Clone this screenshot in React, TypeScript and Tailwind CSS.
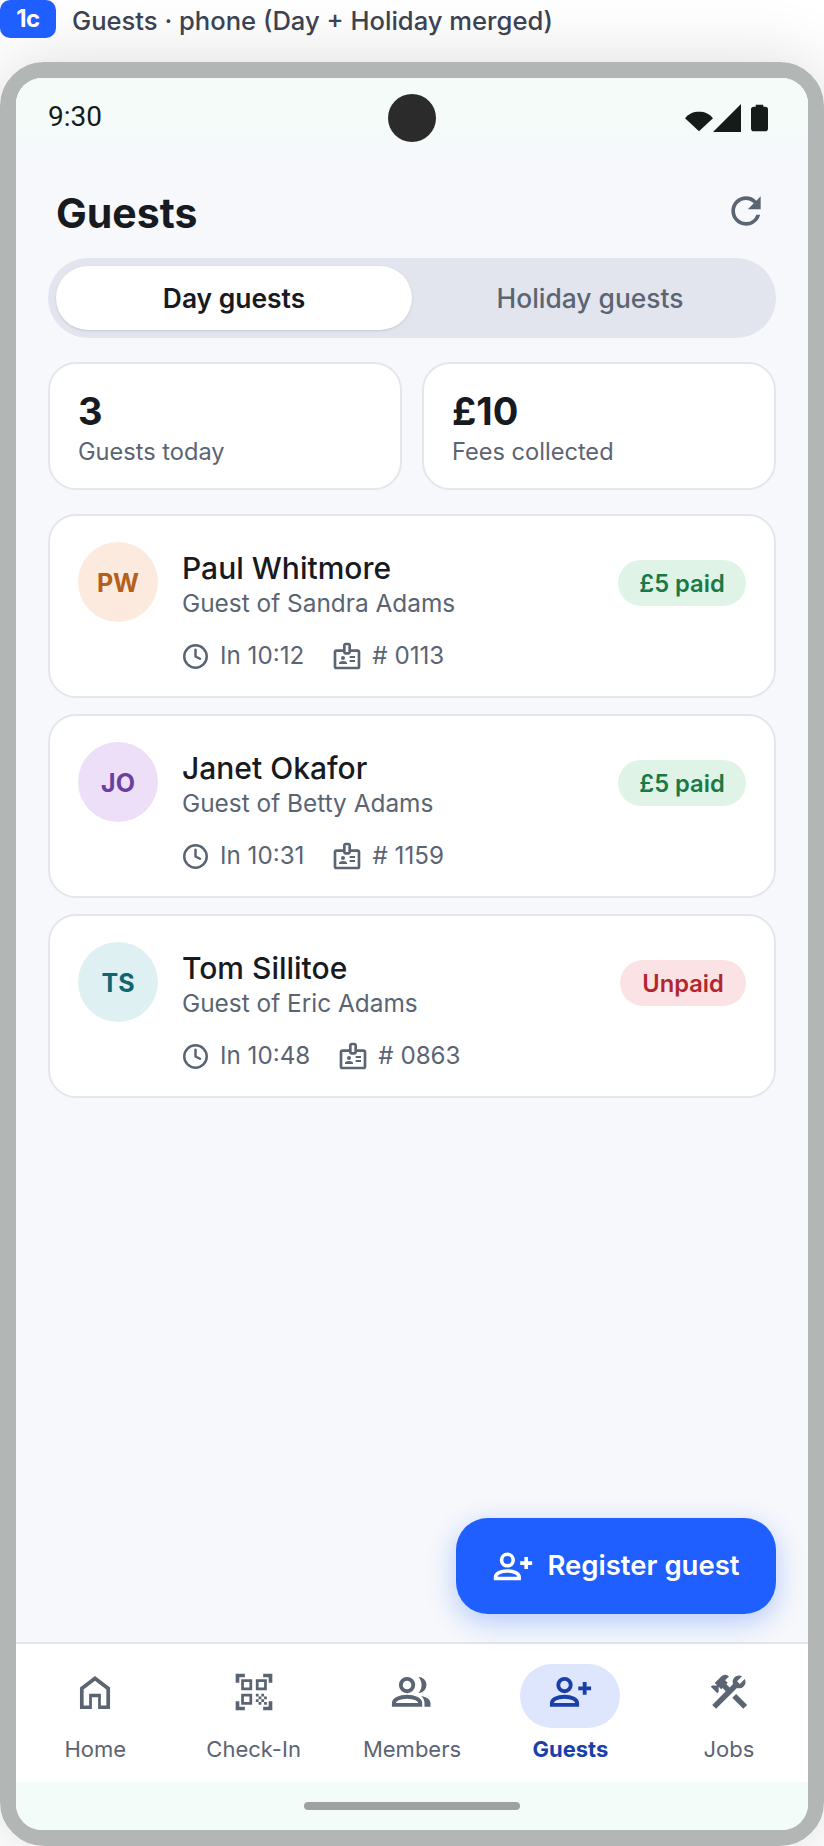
import React, { FC, ReactNode } from "react";
import { Clock } from "lucide-react";
import { MdConstruction, MdOutlineBadge, MdQrCodeScanner, MdRefresh } from "react-icons/md";

const fontStyle = "font-['Inter',sans-serif]";

const HomeIcon: FC = () => (
  <svg viewBox="0 0 24 24" className="h-11 w-11 fill-current" fillRule="evenodd">
    <path d="M3.800 21.300V9.600L12 3.300l8.200 6.300v11.700h-6.500v-6.400h-3.400v6.400H3.800ZM5.800 19.400h3V13h6.400v6.400h3v-8.800L12 5.800l-6.200 4.800v8.800Z" />
  </svg>
);

const PersonAddIcon: FC<{ className?: string }> = ({ className }) => (
  <svg viewBox="0 0 24 24" fill="none" stroke="currentColor" strokeWidth="2.100" className={className}>
    <circle cx="9" cy="8.200" r="3.400" />
    <path d="M2.100 19v-.8c0-2.300 3.100-3.600 6.900-3.600s6.900 1.300 6.900 3.600v.8H2.100Z" />
    <path d="M20 6.500v7M16.500 10h7" />
  </svg>
);

const MembersIcon: FC = () => (
  <svg viewBox="0 0 24 24" className="h-11 w-11 fill-current">
    <circle cx="9.300" cy="8.200" r="3.400" fill="none" stroke="currentColor" strokeWidth="2.100" />
    <path d="M2.100 19v-.8c0-2.300 3.300-3.600 7.200-3.600s7.200 1.300 7.200 3.600v.8H2.100Z" fill="none" stroke="currentColor" strokeWidth="2.100" />
    <path d="M15.500 3.800a4.400 4.400 0 0 1 0 8.800 6.500 6.500 0 0 0 0-8.800Z" />
    <path d="M17 14.200c3 .5 5.100 1.900 5.100 4V20H18.800v-2c0-1.500-.6-2.800-1.800-3.800Z" />
  </svg>
);

const WifiIcon: FC = () => (
  <svg viewBox="0 0 30 22" className="h-[22px] w-[28px] fill-[#141b18]">
    <path d="M0 8C4 3 9 1 15 1s11 2 15 7L15 22 0 8Z" />
  </svg>
);

const SignalIcon: FC = () => (
  <svg viewBox="0 0 28 28" className="h-7 w-7 fill-[#141b18]">
    <path d="M28 0v28H0L28 0Z" />
  </svg>
);

const BatteryIcon: FC = () => (
  <svg viewBox="0 0 18 28" className="h-7 w-[17px] fill-[#141b18]">
    <path d="M5 0h8v2h2a3 3 0 0 1 3 3v20a3 3 0 0 1-3 3H3a3 3 0 0 1-3-3V5a3 3 0 0 1 3-3h2V0Z" />
  </svg>
);

const Stat: FC<{ value: string; label: string }> = ({ value, label }) => (
  <div className="h-[128px] flex-1 rounded-[28px] border-2 border-[#e3e6ed] bg-white pl-[28px] pt-[25px]">
    <div className="text-[38px] leading-[44px] font-bold text-[#171a1f]">{value}</div>
    <div className="mt-[5px] text-[23.600px] leading-[28px] text-[#5b6473]">{label}</div>
  </div>
);

type GuestProps = {
  initials: string;
  avatarClass: string;
  name: string;
  host: string;
  time: string;
  number: string;
  paid: boolean;
};

const GuestCard: FC<GuestProps> = ({ initials, avatarClass, name, host, time, number, paid }) => (
  <div className="flex h-[184px] rounded-[28px] border-2 border-[#e3e6ed] bg-white pl-[28px] pr-[28px] pt-[26px]">
    <div className={`flex h-20 w-20 items-center justify-center rounded-full pt-[3px] text-[25px] font-bold ${avatarClass}`}>
      {initials}
    </div>
    <div className="ml-[24px] flex-1 pt-[8px]">
      <div className="text-[30px] leading-[36px] font-[550] text-[#171a1f]">{name}</div>
      <div className="text-[24.400px] leading-[34px] text-[#5b6473]">{host}</div>
      <div className="mt-[20px] flex items-center text-[24.200px] leading-[30px] text-[#5b6473]">
        <Clock size={27} strokeWidth={2.2} />
        <span className="ml-[11px]">In {time}</span>
        <MdOutlineBadge size={32} className="ml-[27px]" />
        <span className="ml-[9px]"># {number}</span>
      </div>
    </div>
    {paid ? (
      <div className="mt-[18px] flex h-[46px] w-[128px] items-center justify-center rounded-full bg-[#dff3e7] pt-[1px] text-[23.700px] font-semibold text-[#1a7a46]">
        £5 paid
      </div>
    ) : (
      <div className="mt-[18px] flex h-[46px] w-[126px] items-center justify-center rounded-full bg-[#fbe3e5] pt-[1px] text-[23.700px] font-semibold text-[#b3262e]">
        Unpaid
      </div>
    )}
  </div>
);

const NavItem: FC<{ label: string; icon: ReactNode; active?: boolean }> = ({ label, icon, active }) => (
  <div className="flex flex-1 flex-col items-center">
    <div
      className={`flex h-16 w-[100px] items-center justify-center rounded-full pb-2 ${
        active ? "bg-[#dde6fd] text-[#1a3fa8]" : "text-[#5b6473]"
      }`}
    >
      {icon}
    </div>
    <div className={`mt-[7px] text-[22px] leading-[28px] ${active ? "font-bold text-[#1a3fa8]" : "text-[#5b6473]"}`}>
      {label}
    </div>
  </div>
);

export default function App() {
  return (
    <div className={`h-[1846px] w-[824px] overflow-hidden bg-white ${fontStyle}`}>
      <div className="flex h-[38px] items-center">
        <div className="flex h-[38px] w-[56px] items-center justify-center rounded-[10px] bg-[#1f5eff] text-[24px] font-bold tracking-tight text-white">
          1c
        </div>
        <div className="ml-4 pt-[4px] text-[25.600px] font-medium text-[#3b4252]">Guests · phone (Day + Holiday merged)</div>
      </div>

      <div className="mt-6 h-[1784px] rounded-[44px] border-[16px] border-[#b2b6b4] shadow-[0_0_70px_rgba(0,0,0,0.14)]">
        <div className="relative flex h-full flex-col overflow-hidden rounded-[26px] bg-[#f6f8fb]">
          <div className="flex h-[82px] items-center bg-gradient-to-b from-[#f4fcf9] via-[#f4fbf9] to-[#f6f8fb] px-8 pb-[2px]">
            <div className="flex-1 pb-[2px] font-['Roboto',sans-serif] text-[28px] text-[#141b18]">9:30</div>
            <div className="h-12 w-12 rounded-full bg-[#2b2b2b]" />
            <div className="flex flex-1 justify-end">
              <div className="mr-[8px] flex items-center gap-[10px]">
                <div className="flex items-end">
                  <WifiIcon />
                  <SignalIcon />
                </div>
                <BatteryIcon />
              </div>
            </div>
          </div>

          <div className="flex-1 px-8">
            <div className="flex h-[98px] items-center justify-between pl-2 pr-2 pt-[9px]">
              <h1 className="text-[41px] font-bold text-[#171a1f]">Guests</h1>
              <MdRefresh size={44} className="mb-[5px] text-[#5b6473]" />
            </div>

            <div className="flex h-20 rounded-full bg-[#e2e5ed] p-2">
              <div className="flex flex-1 items-center justify-center rounded-full bg-white pt-[1px] text-[26.400px] font-semibold text-[#171a1f] shadow-sm">
                Day guests
              </div>
              <div className="flex flex-1 items-center justify-center pt-[1px] text-[26.400px] font-medium text-[#5b6473]">
                Holiday guests
              </div>
            </div>

            <div className="mt-6 flex gap-[20px]">
              <Stat value="3" label="Guests today" />
              <Stat value="£10" label="Fees collected" />
            </div>

            <div className="mt-[24px] flex flex-col gap-4">
              <GuestCard
                initials="PW"
                avatarClass="bg-[#fdeadf] text-[#b4601c]"
                name="Paul Whitmore"
                host="Guest of Sandra Adams"
                time="10:12"
                number="0113"
                paid
              />
              <GuestCard
                initials="JO"
                avatarClass="bg-[#ecdff7] text-[#6b3fa0]"
                name="Janet Okafor"
                host="Guest of Betty Adams"
                time="10:31"
                number="1159"
                paid
              />
              <GuestCard
                initials="TS"
                avatarClass="bg-[#dff0f3] text-[#0f6670]"
                name="Tom Sillitoe"
                host="Guest of Eric Adams"
                time="10:48"
                number="0863"
                paid={false}
              />
            </div>
          </div>

          <button className="absolute bottom-[216px] right-8 flex h-24 w-80 items-center justify-center gap-[14px] rounded-[32px] bg-[#1f5eff] text-[27.500px] font-semibold text-white shadow-[0_8px_28px_rgba(31,94,255,0.3)]">
            <PersonAddIcon className="h-[41px] w-[41px]" />
            Register guest
          </button>

          <div className="flex h-[140px] border-t-2 border-[#e3e6ed] bg-white pt-5">
            <NavItem label="Home" icon={<HomeIcon />} />
            <NavItem label="Check-In" icon={<MdQrCodeScanner size={44} />} />
            <NavItem label="Members" icon={<MembersIcon />} />
            <NavItem label="Guests" icon={<PersonAddIcon className="h-11 w-11" />} active />
            <NavItem label="Jobs" icon={<MdConstruction size={44} />} />
          </div>
          <div className="flex h-12 justify-center bg-[#f4fcf9] pt-5">
            <div className="h-2 w-[216px] rounded-full bg-[#9ea3a1]" />
          </div>
        </div>
      </div>
    </div>
  );
}
